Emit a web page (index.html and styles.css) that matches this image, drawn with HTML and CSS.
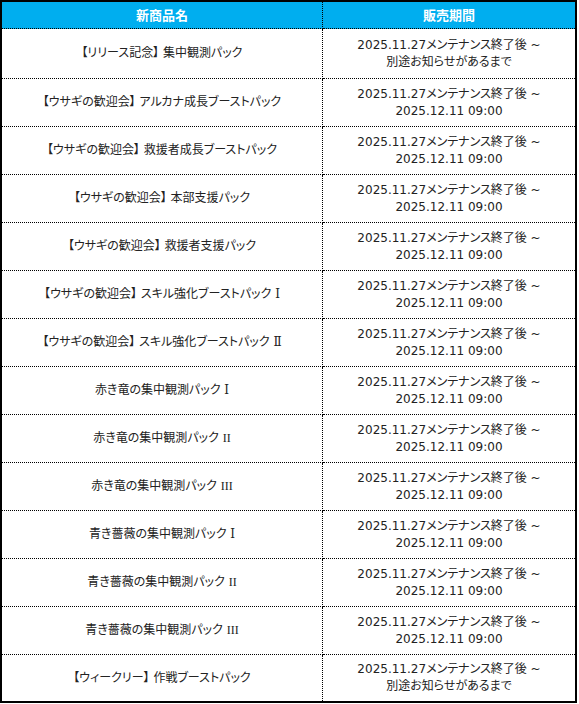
FILE: index.html
```html
<!DOCTYPE html>
<html lang="ja">
<head>
<meta charset="utf-8">
<link rel="stylesheet" href="styles.css">
</head>
<body>
<div class="table">
  <div class="cell head name">新商品名</div>
  <div class="cell head period">販売期間</div>

  <div class="cell name r1">【リリース記念】 集中観測パック</div>
  <div class="cell period r1">2025.11.27メンテナンス終了後 ~<br>別途お知らせがあるまで</div>

  <div class="cell name">【ウサギの歓迎会】 アルカナ成長ブーストパック</div>
  <div class="cell period">2025.11.27メンテナンス終了後 ~<br>2025.12.11 09:00</div>

  <div class="cell name">【ウサギの歓迎会】 救援者成長ブーストパック</div>
  <div class="cell period">2025.11.27メンテナンス終了後 ~<br>2025.12.11 09:00</div>

  <div class="cell name">【ウサギの歓迎会】 本部支援パック</div>
  <div class="cell period">2025.11.27メンテナンス終了後 ~<br>2025.12.11 09:00</div>

  <div class="cell name">【ウサギの歓迎会】 救援者支援パック</div>
  <div class="cell period">2025.11.27メンテナンス終了後 ~<br>2025.12.11 09:00</div>

  <div class="cell name">【ウサギの歓迎会】 スキル強化ブーストパック&nbsp;<span class="roman">Ⅰ</span></div>
  <div class="cell period">2025.11.27メンテナンス終了後 ~<br>2025.12.11 09:00</div>

  <div class="cell name">【ウサギの歓迎会】 スキル強化ブーストパック&nbsp;<span class="roman">Ⅱ</span></div>
  <div class="cell period">2025.11.27メンテナンス終了後 ~<br>2025.12.11 09:00</div>

  <div class="cell name">赤き竜の集中観測パック&nbsp;<span class="roman">Ⅰ</span></div>
  <div class="cell period">2025.11.27メンテナンス終了後 ~<br>2025.12.11 09:00</div>

  <div class="cell name">赤き竜の集中観測パック&nbsp;<span class="roman">II</span></div>
  <div class="cell period">2025.11.27メンテナンス終了後 ~<br>2025.12.11 09:00</div>

  <div class="cell name">赤き竜の集中観測パック&nbsp;<span class="roman">III</span></div>
  <div class="cell period">2025.11.27メンテナンス終了後 ~<br>2025.12.11 09:00</div>

  <div class="cell name">青き薔薇の集中観測パック&nbsp;<span class="roman">Ⅰ</span></div>
  <div class="cell period">2025.11.27メンテナンス終了後 ~<br>2025.12.11 09:00</div>

  <div class="cell name">青き薔薇の集中観測パック&nbsp;<span class="roman">II</span></div>
  <div class="cell period">2025.11.27メンテナンス終了後 ~<br>2025.12.11 09:00</div>

  <div class="cell name">青き薔薇の集中観測パック&nbsp;<span class="roman">III</span></div>
  <div class="cell period">2025.11.27メンテナンス終了後 ~<br>2025.12.11 09:00</div>

  <div class="cell name last">【ウィークリー】 作戦ブーストパック</div>
  <div class="cell period last">2025.11.27メンテナンス終了後 ~<br>別途お知らせがあるまで</div>
</div>
</body>
</html>
```

FILE: styles.css
```css
html, body {
  margin: 0;
  padding: 0;
  background: #fff;
}

.table {
  box-sizing: border-box;
  width: 577px;
  height: 703px;
  border: 2px solid #000;
  display: grid;
  grid-template-columns: 321px 252px;
  grid-template-rows: 27px 50px repeat(12, 48px) 46px;
  font-family: "DejaVu Sans", "Noto Sans CJK JP", sans-serif;
  font-feature-settings: "palt";
  font-size: 12px;
  line-height: 17px;
  color: #222;
}

.cell {
  display: flex;
  align-items: center;
  justify-content: center;
  text-align: center;
  white-space: pre-wrap;
  border-bottom: 1px dotted #000;
}

.cell.name {
  border-right: 1px dotted #000;
}

.cell.last {
  border-bottom: none;
}

.roman {
  font-family: "Liberation Serif", "DejaVu Serif", serif;
  font-size: 12px;
}

.head {
  background: #00aeef;
  color: #fff;
  font-weight: bold;
  font-size: 13px;
}
```
